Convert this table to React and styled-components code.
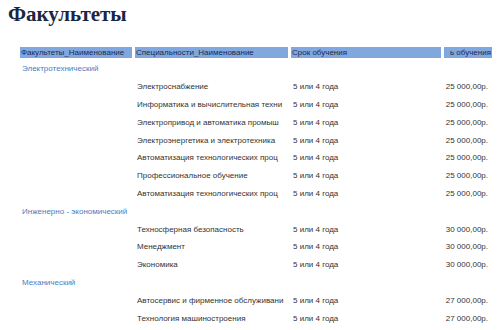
import React from "react";
import styled, { createGlobalStyle } from "styled-components";

const Global = createGlobalStyle`
  html, body { margin: 0; padding: 0; background: #fff; }
  body { font-family: "Liberation Sans", Arial, sans-serif; }
`;

const Page = styled.div`
  width: 500px;
  height: 330px;
  overflow: hidden;
  padding: 2px 0 0 8px;
  box-sizing: border-box;
`;

const Title = styled.h1`
  margin: 0;
  font-family: "Liberation Serif", "Times New Roman", serif;
  font-weight: bold;
  font-size: 21px;
  line-height: 24px;
  color: #1a2644;
`;

const Table = styled.div`
  margin: 21px 0 0 12px;
  display: grid;
  grid-template-columns: 112px 153px 150px 48px;
  column-gap: 3px;
  font-size: 8px;
`;

const HeadCell = styled.div`
  height: 11px;
  line-height: 11px;
  background: #80a8df;
  color: #1a2a52;
  padding: 0 1px;
  white-space: nowrap;
  overflow: hidden;
  display: flex;
  justify-content: ${(p) => (p.$right ? "flex-end" : "flex-start")};
  margin-bottom: 2px;
`;

const Cell = styled.div`
  height: 17.8px;
  display: flex;
  align-items: center;
  justify-content: ${(p) => (p.$right ? "flex-end" : "flex-start")};
  padding: ${(p) => (p.$right ? "0 4px 0 0" : "0 2px")};
  white-space: nowrap;
  overflow: hidden;
  color: ${(p) => (p.$group ? "#4a7cbf" : "#333")};
`;

const data = [
  {
    name: "Электротехнический",
    price: "25 000,00р.",
    items: [
      "Электроснабжение",
      "Информатика и вычислительная техни",
      "Электропривод и автоматика промыш",
      "Электроэнергетика и электротехника",
      "Автоматизация технологических проц",
      "Профессиональное обучение",
      "Автоматизация технологических проц",
    ],
  },
  {
    name: "Инженерно - экономический",
    price: "30 000,00р.",
    items: ["Техносферная безопасность", "Менеджмент", "Экономика"],
  },
  {
    name: "Механический",
    price: "27 000,00р.",
    items: ["Автосервис и фирменное обслуживани", "Технология машиностроения"],
  },
];

export default function App() {
  return (
    <>
      <Global />
      <Page>
        <Title>Факультеты</Title>
        <Table>
          <HeadCell>Факультеты_Наименование</HeadCell>
          <HeadCell>Специальности_Наименование</HeadCell>
          <HeadCell>Срок обучения</HeadCell>
          <HeadCell $right>ь обучения</HeadCell>
          {data.map((g, gi) => (
            <React.Fragment key={g.name}>
              <Cell $group>{g.name}</Cell>
              <Cell />
              <Cell />
              <Cell />
              {g.items.map((it, i) => (
                <React.Fragment key={gi + "-" + i}>
                  <Cell />
                  <Cell>{it}</Cell>
                  <Cell>5 или 4 года</Cell>
                  <Cell $right>{g.price}</Cell>
                </React.Fragment>
              ))}
            </React.Fragment>
          ))}
        </Table>
      </Page>
    </>
  );
}
